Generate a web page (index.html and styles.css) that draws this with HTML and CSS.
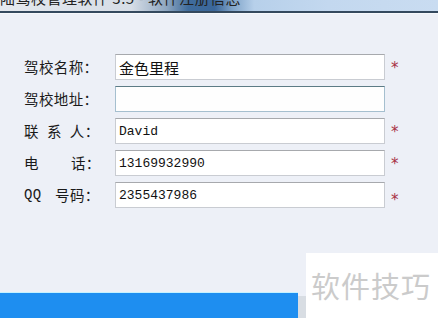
FILE: index.html
```html
<!DOCTYPE html>
<html lang="zh-CN">
<head>
<meta charset="utf-8">
<title>软件注册信息</title>
<link rel="stylesheet" href="styles.css">
</head>
<body>
<div class="window">
  <div class="titlebar">
    <span class="title">陆驾校管理软件 3.5 - 软件注册信息</span>
  </div>
  <form class="form">
    <div class="row">
      <label class="label">驾校名称：</label>
      <div class="field"><span class="value cjk">金色里程</span></div>
      <span class="req">*</span>
    </div>
    <div class="row">
      <label class="label">驾校地址：</label>
      <div class="field field-focus"></div>
      <span class="req"></span>
    </div>
    <div class="row">
      <label class="label">联<span class="gap-s"></span>系<span class="gap-s"></span>人：</label>
      <div class="field"><span class="value">David</span></div>
      <span class="req">*</span>
    </div>
    <div class="row">
      <label class="label">电<span class="gap"></span>话：</label>
      <div class="field"><span class="value">13169932990</span></div>
      <span class="req">*</span>
    </div>
    <div class="row">
      <label class="label"><span class="qq">QQ</span>号码：</label>
      <div class="field"><span class="value">2355437986</span></div>
      <span class="req req-low">*</span>
    </div>
  </form>
  <div class="footer">
    <div class="bluebar"></div>
    <div class="strip"></div>
  </div>
  <div class="watermark">软件技巧</div>
</div>
</body>
</html>
```
FILE: styles.css
```css
html, body {
  margin: 0;
  padding: 0;
}
body {
  width: 438px;
  height: 318px;
  overflow: hidden;
  background: #edf0f7;
  font-family: "Noto Sans CJK SC", "DejaVu Sans", sans-serif;
}
.window {
  position: relative;
  height: 318px;
  display: flex;
  flex-direction: column;
}
.titlebar {
  height: 11px;
  overflow: hidden;
  background: linear-gradient(90deg, #e4e8ee 0%, #d6dde6 30%, #8ea6c0 38%, #3f6c9c 43%, #3b679a 49%, #7fa3c8 53%, #b7d0ea 58%, #c3d8ef 75%, #c9dcf1 100%);
  border-bottom: 2px solid #34495e;
  box-shadow: 0 1px 0 #f6f8fb;
}
.title {
  display: block;
  margin-top: -11px;
  font-size: 15px;
  line-height: 18px;
  color: #222;
  white-space: nowrap;
  letter-spacing: 0.5px;
}
.form {
  display: flex;
  flex-direction: column;
  gap: 6px;
  padding: 41px 0 0 24px;
  margin: 0;
}
.row {
  display: flex;
  align-items: center;
  height: 26px;
}
.label {
  width: 91px;
  font-size: 14.5px;
  letter-spacing: 0.4px;
  color: #1a1a1a;
  white-space: nowrap;
  display: flex;
  align-items: center;
  padding-bottom: 1px;
}
.gap {
  display: inline-block;
  width: 32px;
}
.gap-s {
  display: inline-block;
  width: 8px;
}
.qq {
  font-family: "Liberation Mono", monospace;
  font-size: 14px;
  width: 31px;
  display: inline-block;
}
.field {
  box-sizing: border-box;
  width: 270px;
  height: 26px;
  background: #fff;
  border: 1px solid #c9ccd2;
  border-top-color: #a7a9ad;
  display: flex;
  align-items: center;
  padding-left: 3px;
}
.field-focus {
  border-color: #a5bfcf;
  border-top-color: #5d7c86;
  background: #fefefe;
}
.value {
  font-family: "Liberation Mono", monospace;
  font-size: 13px;
  color: #111;
}
.value.cjk {
  font-family: "Noto Sans CJK SC", sans-serif;
  font-size: 15px;
}
.req {
  width: 12px;
  margin-left: 6px;
  color: #a83244;
  font-family: "DejaVu Sans", sans-serif;
  font-size: 15px;
  line-height: 1;
  padding-top: 2px;
}
.req-low {
  padding-top: 10px;
}
.footer {
  margin-top: auto;
  display: flex;
  align-items: flex-end;
  height: 26px;
}
.bluebar {
  width: 298px;
  height: 25px;
  background: #1e8ef0;
  border-top: 1px solid #c6f2ff;
}
.strip {
  width: 8px;
  height: 22px;
  background: #d8dde3;
}
.watermark {
  position: absolute;
  left: 306px;
  top: 253px;
  width: 132px;
  height: 65px;
  background: #fff;
  color: #cbcbcb;
  font-size: 29px;
  line-height: 65px;
  padding-left: 5px;
  box-sizing: border-box;
  letter-spacing: 1px;
  white-space: nowrap;
}
```
